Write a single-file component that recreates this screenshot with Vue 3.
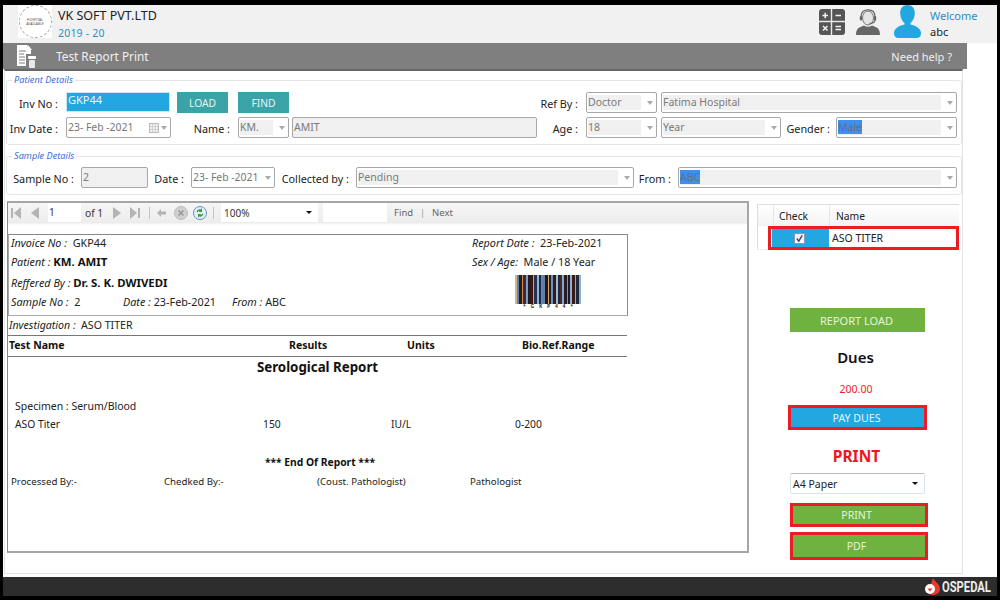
<script setup>
const barcodeColors = ['#c9b98a','#5a7fb0','#2a1a14','#c98a4a','#3b2a3a','#7f9cc8','#1c1a2e','#3a1712','#e0a050','#27324f','#8fb4dc','#1e2a44','#b07a50','#5f7fa8','#2a1512','#d8a868','#1a2030','#6b92c4','#3a1a14','#aab8c8','#1c2a4a','#4a2a20','#80a8d0','#2a1a20','#7fa070','#1a1a2a','#90b0d8','#3a1a14','#c8a070','#22283c','#8ab0d8']
const barcodeWidths = [2,2,3,1,3,2,2,3,1,3,2,2,1,3,3,1,2,2,3,2,2,2,2,3,1,2,2,3,1,3,3]
let x = 0
const bars = barcodeWidths.map((w, i) => {
  const bar = { x, w, c: barcodeColors[i] }
  x += w
  return bar
})
</script>

<template>
  <div class="app">
    <header class="top">
      <div class="logo">
        <div class="logo-ring"><span>HOSPITAL</span><span>AVAILABLE</span></div>
      </div>
      <div class="company">
        <div class="company-name">VK SOFT PVT.LTD</div>
        <div class="company-year">2019 - 20</div>
      </div>
      <svg class="ic-calc" width="26" height="26" viewBox="0 0 26 26">
        <rect width="26" height="26" rx="3" fill="#555" />
        <path d="M12.5 0v26M0 12.5h26" stroke="#e8e8e8" stroke-width="1.4" />
        <path d="M3.5 6.5h5.5M6.2 3.8v5.4M16.5 6.5h5.5M4 17l4.5 4.5M8.5 17L4 21.5M16.5 17.5h5.5M16.5 20.5h5.5" stroke="#f2f2f2" stroke-width="1.5" fill="none" />
      </svg>
      <svg class="ic-agent" width="24" height="26" viewBox="0 0 24 26">
        <ellipse cx="12" cy="9" rx="5.500" ry="7" fill="#e4e4e4" stroke="#777" stroke-width="1" />
        <path d="M5 7.500C5 2.800 8 .8 12 .8s7 2 7 6.700v3" fill="none" stroke="#666" stroke-width="1.300" />
        <path d="M19 11c0 2.200-2.500 3.400-5.500 3.600" fill="none" stroke="#666" stroke-width="1.100" />
        <rect x="3.800" y="7" width="2.200" height="4.500" rx="1" fill="#666" />
        <rect x="18" y="7" width="2.200" height="4.500" rx="1" fill="#666" />
        <path d="M0 26c0-5 1.800-7 5-8.200l3-1.400c2.400 1.800 5.600 1.800 8 0l3 1.400c3.200 1.200 5 3.200 5 8.200z" fill="#666" />
      </svg>
      <svg class="ic-user" width="27" height="33" viewBox="0 0 27 33">
        <path d="M13.500 0c4.500 0 7.300 3 7.300 8 0 4.500-2.200 8.500-4.300 10v1.500c4.500 1 10.500 3.500 10.500 8.500 0 3.500-1.500 5-4.500 5H4.500C1.500 33 0 31.500 0 28c0-5 6-7.500 10.500-8.500V18c-2.100-1.500-4.300-5.500-4.300-10 0-5 2.800-8 7.300-8z" fill="#22a7e0" />
      </svg>
      <div class="welcome">
        <div class="welcome-title">Welcome</div>
        <div class="welcome-name">abc</div>
      </div>
    </header>

    <div class="work">
      <div class="titlebar">
        <svg class="ic-doc" width="20" height="23" viewBox="0 0 20 23">
          <path d="M0 0h10l4 5v4H9v12H0z" fill="#fff" />
          <path d="M11 0l4 5h-4z" fill="#fff" />
          <path d="M2 6h7M2 9h5M2 12h6M2 15h6M2 18h6" stroke="#7f7f7f" stroke-width="1.2" />
          <rect x="11" y="11" width="8" height="3" rx="1" fill="#fff" />
          <rect x="12" y="15" width="6" height="8" rx="1" fill="#e8e8e8" />
        </svg>
        <span class="title-text">Test Report Print</span>
        <span class="help">Need help ?</span>
      </div>

      <main class="panel">
        <fieldset class="group group-patient">
          <legend>Patient Details</legend>
          <div class="row">
            <label class="lbl w51">Inv No :</label>
            <div class="input-active ml8 w104">GKP44</div>
            <button class="teal ml7 w51">LOAD</button>
            <button class="teal ml10 w51">FIND</button>
            <label class="lbl w289">Ref By :</label>
            <div class="field ml8 w71"><span class="val">Doctor</span><i class="caret"></i></div>
            <div class="field ml4 w296"><span class="val">Fatima Hospital</span><i class="caret"></i></div>
          </div>
          <div class="row row-second">
            <label class="lbl w51">Inv Date :</label>
            <div class="field plain ml8 w105">
              <span class="val date">23- Feb -2021</span>
              <svg class="cal" width="10" height="10" viewBox="0 0 10 10"><rect x=".5" y=".5" width="9" height="9" fill="#eee" stroke="#bbb" /><path d="M1 3.500h8M1 6.500h8M3.500 1v8M6.500 1v8" stroke="#ccc" stroke-width=".8" /></svg>
              <i class="caret tight"></i>
            </div>
            <label class="lbl w59">Name :</label>
            <div class="field ml8 w51"><span class="val">KM.</span><i class="caret"></i></div>
            <div class="field fill-full ml3 w245"><span class="val">AMIT</span></div>
            <label class="lbl w41">Age :</label>
            <div class="field ml8 w71"><span class="val">18</span><i class="caret"></i></div>
            <div class="field ml4 w120"><span class="val">Year</span><i class="caret"></i></div>
            <label class="lbl w49">Gender :</label>
            <div class="field ml6 w121"><span class="val"><mark>Male</mark></span><i class="caret"></i></div>
          </div>
        </fieldset>

        <fieldset class="group group-sample">
          <legend>Sample Details</legend>
          <div class="row">
            <label class="lbl w67">Sample No :</label>
            <div class="field fill-full ml7 w67"><span class="val">2</span></div>
            <label class="lbl w36">Date :</label>
            <div class="field plain ml7 w84"><span class="val date">23- Feb -2021</span><i class="caret"></i></div>
            <label class="lbl w74">Collected by :</label>
            <div class="field ml7 w278"><span class="val">Pending</span><i class="caret"></i></div>
            <label class="lbl w37">From :</label>
            <div class="field ml7 w279"><span class="val"><mark>ABC</mark></span><i class="caret"></i></div>
          </div>
        </fieldset>

        <div class="lower">
          <section class="viewer">
            <div class="toolbar">
              <svg class="tb-first" width="10" height="12" viewBox="0 0 10 12"><path d="M0 1h2v10H0zM10 0v12L3 6z" fill="#b4b4b4" /></svg>
              <svg class="tb-prev" width="8" height="12" viewBox="0 0 8 12"><path d="M8 0v12L0 6z" fill="#b4b4b4" /></svg>
              <div class="tb-page">1</div>
              <span class="tb-of">of 1</span>
              <svg class="tb-next" width="8" height="12" viewBox="0 0 8 12"><path d="M0 0v12l8-6z" fill="#b4b4b4" /></svg>
              <svg class="tb-last" width="10" height="12" viewBox="0 0 10 12"><path d="M8 1h2v10H8zM0 0v12l7-6z" fill="#b4b4b4" /></svg>
              <i class="tb-sep sep-a"></i>
              <svg class="tb-back" width="9" height="8" viewBox="0 0 9 8"><path d="M4 0v2.500h5v3H4V8L0 4z" fill="#b4b4b4" /></svg>
              <svg class="tb-stop" width="14" height="14" viewBox="0 0 14 14"><circle cx="7" cy="7" r="6.500" fill="#cfcfcf" stroke="#bbb" /><path d="M4.500 4.500l5 5M9.500 4.500l-5 5" stroke="#999" stroke-width="1.600" /></svg>
              <svg class="tb-refresh" width="14" height="14" viewBox="0 0 14 14"><circle cx="7" cy="7" r="6.500" fill="#e4f0fa" stroke="#5b93c8" /><path d="M3.500 6c.5-2 2.500-3 4.500-2.500L9 2v4H5.500l1.300-1C5.500 4.800 4.800 5.500 4.500 6.500z" fill="#3b9a3b" /><path d="M10.500 8c-.5 2-2.500 3-4.500 2.500L5 12V8h3.500l-1.300 1c1.300.2 2-.5 2.300-1.500z" fill="#3b9a3b" /></svg>
              <i class="tb-sep sep-b"></i>
              <div class="tb-zoom"><span>100%</span><i class="caret-dark"></i></div>
              <div class="tb-search"></div>
              <span class="tb-find">Find</span>
              <span class="tb-bar">|</span>
              <span class="tb-nextlink">Next</span>
            </div>

            <div class="report">
              <div class="rbox">
                <div class="rbox-left">
                  <div class="r1"><em>Invoice No :</em>&nbsp; GKP44</div>
                  <div class="r2"><em>Patient :</em>&nbsp;<b>KM. AMIT</b></div>
                  <div class="r3"><em>Reffered By :</em>&nbsp;<b>Dr. S. K. DWIVEDI</b></div>
                  <div class="r4">
                    <span class="r4a"><em>Sample No :</em>&nbsp; 2</span>
                    <span class="r4b"><em>Date :</em> 23-Feb-2021</span>
                    <span><em>From :</em> ABC</span>
                  </div>
                </div>
                <div class="rbox-right">
                  <div class="r1"><em>Report Date :</em>&nbsp; 23-Feb-2021</div>
                  <div class="r2"><em>Sex / Age:</em>&nbsp; Male / 18 Year</div>
                  <svg class="barcode" width="66" height="29" viewBox="0 0 66 29">
                    <rect v-for="(b, i) in bars" :key="i" :x="b.x" y="0" :width="b.w" height="29" :fill="b.c" />
                  </svg>
                  <div class="barcode-text">* G K P 4 4 *</div>
                </div>
              </div>
              <div class="investigation"><em>Investigation :</em>&nbsp; ASO TITER</div>
              <div class="thead">
                <b>Test Name</b><b>Results</b><b>Units</b><b>Bio.Ref.Range</b>
              </div>
              <div class="rep-title">Serological Report</div>
              <div class="specimen">Specimen : Serum/Blood</div>
              <div class="tdata"><span>ASO Titer</span><span>150</span><span>IU/L</span><span>0-200</span></div>
              <div class="rep-end">*** End Of Report ***</div>
              <div class="sign"><span>Processed By:-</span><span>Chedked By:-</span><span>(Coust. Pathologist)</span><span>Pathologist</span></div>
            </div>
          </section>

          <aside class="side">
            <div class="grid-head"><span class="gh-check">Check</span><span class="gh-name">Name</span></div>
            <div class="grid-row">
              <div class="grid-rowhead"></div>
              <div class="red-row">
                <div class="cell-check"><span class="checkbox">
                  <svg width="9" height="9" viewBox="0 0 10 10"><path d="M2 5l2.200 3L8 1.500" fill="none" stroke="#33457a" stroke-width="1.500" /></svg>
                </span></div>
                <div class="cell-name">ASO TITER</div>
              </div>
            </div>
            <div class="actions">
              <button class="green btn-load">REPORT LOAD</button>
              <div class="dues">Dues</div>
              <div class="amount">200.00</div>
              <button class="pay">PAY DUES</button>
              <div class="print-title">PRINT</div>
              <div class="paper"><span>A4 Paper</span><i class="caret-dark"></i></div>
              <button class="green outlined btn-print">PRINT</button>
              <button class="green outlined btn-pdf">PDF</button>
            </div>
          </aside>
        </div>
      </main>
    </div>

    <footer class="bottom">
      <svg class="drop" width="15" height="17" viewBox="0 0 15 17">
        <path d="M8 0c1 3 7 6 7 11 0 3.500-3 6-7 6-3 0-5-1.500-6-3.500L5 9 8 0z" fill="#e8392c" />
        <circle cx="5" cy="11" r="5" fill="#fff" />
        <path d="M2.500 10.500h5L5 13.500z" fill="#e8392c" />
      </svg>
      <span class="brand">OSPEDAL</span>
    </footer>
  </div>
</template>

<style>
html, body { margin: 0; background: #000; }
</style>

<style scoped>
* { box-sizing: border-box; }
.app {
  width: 1000px; height: 600px; background: #000; padding: 5px 3px 4px;
  display: flex; flex-direction: column; overflow: hidden;
  font-family: "Noto Sans", "Open Sans", sans-serif; font-size: 10.8px; color: #222;
}
.top { height: 38px; background: #f1f1f1; display: flex; align-items: center; flex: none; }
.logo { width: 34px; height: 33px; margin: 0 0 5px 15px; background: #fff; display: flex; align-items: center; justify-content: center; }
.logo-ring { width: 33px; height: 33px; border: 1px dashed #aaa; border-radius: 50%; display: flex; flex-direction: column; align-items: center; justify-content: center; font-size: 3.500px; line-height: 4px; color: #555; }
.company { margin-left: 6px; width: 761px; }
.company-name { font-size: 12.5px; line-height: 16px; margin-top: 0; color: #222; }
.company-year { font-size: 10.5px; line-height: 16px; margin-top: 1px; color: #2a8fc8; letter-spacing: .2px; }
.ic-calc { margin-top: -5px; flex: none; }
.ic-agent { margin: -5px 0 0 11px; flex: none; }
.ic-user { margin: -5px 0 0 14px; flex: none; }
.welcome { margin-left: 9px; margin-top: -1px; }
.welcome-title { color: #2a8fc8; font-size: 11px; line-height: 16px; }
.welcome-name { font-size: 11px; line-height: 16px; color: #222; }

.work { flex: 1; background: #fff; min-height: 0; }
.titlebar { height: 26px; width: 964px; background: #7f7f7f; display: flex; align-items: center; color: #f0f0f0; }
.ic-doc { margin-left: 14px; flex: none; }
.title-text { margin-left: 19px; font-size: 11.8px; }
.help { margin-left: auto; margin-right: 15px; font-size: 11px; padding-top: 1px; }

.panel { margin-left: 1px; width: 959px; height: 505px; background: #fff; border: 1px solid #e2e2e2; border-top: 2px solid #666; }

.group { margin: 4px 0 0 1px; width: 956px; padding: 0; border: 1px solid #e2e7ec; border-radius: 3px; min-width: 0; }
.group legend { margin-left: 5px; padding: 0 2px; height: 10px; line-height: 10px; font-size: 9.200px; font-style: italic; color: #3b6fd8; }
.group-patient { padding: 7px 0 6px; }
.group-sample { margin-top: 6px; padding: 6px 0 6px; }
.row { display: flex; align-items: center; height: 21px; }
.row-second { margin-top: 4px; }
.lbl { display: block; text-align: right; font-size: 10.8px; color: #222; flex: none; white-space: nowrap; line-height: 21px; padding-top: 2px; }

.w36 { width: 36px; } .w37 { width: 37px; } .w41 { width: 41px; } .w49 { width: 49px; } .w51 { width: 51px; }
.w59 { width: 59px; } .w67 { width: 67px; } .w71 { width: 71px; } .w74 { width: 74px; } .w84 { width: 84px; }
.w104 { width: 104px; } .w105 { width: 105px; } .w120 { width: 120px; } .w121 { width: 121px; } .w245 { width: 245px; }
.w278 { width: 278px; } .w279 { width: 279px; } .w289 { width: 289px; } .w296 { width: 296px; }
.ml3 { margin-left: 3px; } .ml4 { margin-left: 4px; } .ml6 { margin-left: 6px; } .ml7 { margin-left: 7px; } .ml8 { margin-left: 8px; } .ml10 { margin-left: 10px; }

.input-active { height: 20px; margin-top: -1px; flex: none; background: #22a7e0; border: 1px solid #cfe4ef; color: #eef6fb; font-size: 11px; line-height: 14px; padding-left: 1px; }
.teal { height: 21px; flex: none; background: #3aa3a8; border: 0; color: #e4f3f4; font: inherit; font-size: 10.3px; padding: 0; }
.field { height: 21px; flex: none; display: flex; align-items: center; border: 1px solid #a8a8a8; border-radius: 2px; background: #fff; padding: 2px 1px 2px 1px; }
.val { flex: 1; height: 15px; background: #f0f0f0; color: #7a7a7a; font-size: 10.5px; line-height: 14px; white-space: nowrap; overflow: hidden; margin-right: 6px; }
.val.date { background: transparent; color: #777; margin-right: 0; font-size: 10.4px; }
.fill-full .val { margin-right: 0; }
.fill-full { background: #f0f0f0; }
.val mark { background: #3e8ff0; color: #5f6f86; }
.caret { width: 0; height: 0; margin: 0 2px 0 0; border-left: 3.500px solid transparent; border-right: 3.500px solid transparent; border-top: 4px solid #aaa; flex: none; }
.caret.tight { margin: 0 2px 0 2px; }
.cal { flex: none; }

.lower { display: flex; margin-top: 6px; }
.viewer { margin-left: 2px; width: 742px; height: 352px; border: 2px solid #a6a6a6; border-left: 1px solid #8a8a8a; flex: none; }
.toolbar { height: 19px; display: flex; align-items: center; background: linear-gradient(#f5f5f5, #ededed); position: relative; color: #333; }
.toolbar::after { content: ""; position: absolute; left: 0; right: 0; top: 19px; height: 3px; background: linear-gradient(#e8e8e8, #fff); }
.tb-first { margin-left: 3px; flex: none; }
.tb-prev { margin-left: 10px; flex: none; }
.tb-page { margin-left: 9px; width: 33px; height: 19px; background: #fff; font-size: 10px; line-height: 19px; padding-left: 1px; flex: none; }
.tb-of { margin-left: 4px; width: 22px; font-size: 10.2px; flex: none; white-space: nowrap; }
.tb-next { margin-left: 6px; flex: none; }
.tb-last { margin-left: 9px; flex: none; }
.tb-sep { width: 1px; height: 12px; background: #c4c4c4; flex: none; }
.sep-a { margin-left: 9px; }
.tb-back { margin-left: 7px; flex: none; }
.tb-stop { margin-left: 8px; flex: none; }
.tb-refresh { margin-left: 5px; flex: none; }
.sep-b { margin-left: 6px; }
.tb-zoom { margin-left: 7px; width: 97px; height: 19px; background: #fff; display: flex; align-items: center; justify-content: space-between; padding: 0 6px 0 3px; font-size: 10px; flex: none; }
.tb-search { margin-left: 5px; width: 64px; height: 19px; background: #fff; flex: none; }
.tb-find { margin-left: 7px; font-size: 9.500px; color: #666; }
.tb-bar { margin-left: 7px; font-size: 9px; color: #999; }
.tb-nextlink { margin-left: 7px; font-size: 9.500px; color: #666; }
.caret-dark { width: 0; height: 0; border-left: 3px solid transparent; border-right: 3px solid transparent; border-top: 3.500px solid #111; flex: none; }

.report { padding-top: 12px; font-size: 10.8px; color: #222; line-height: 18px; }
.report em { font-style: italic; color: #222; }
.report b { font-weight: 700; color: #111; }
.rbox { width: 620px; height: 82px; border: 1px solid #888; border-left-color: #aaa; border-bottom-color: #aaa; display: flex; }
.rbox-left { width: 463px; padding-left: 2px; flex: none; }
.rbox-right { flex: 1; }
.r1 { height: 18px; line-height: 16px; }
.r2 { height: 20px; line-height: 18px; }
.r3 { height: 21px; line-height: 20px; }
.r4 { height: 18px; line-height: 16px; display: flex; }
.r2 b, .r3 b { font-size: 11.4px; }
.r4a { width: 112px; }
.r4b { width: 109px; }
.barcode { display: block; margin: 2px 0 0 43px; }
.barcode-text { margin-left: 43px; width: 66px; text-align: center; font-size: 5px; line-height: 5px; font-weight: 700; color: #333; word-spacing: 3.500px; white-space: nowrap; }
.investigation { height: 19px; line-height: 18px; width: 620px; padding-left: 1px; font-size: 10.6px; }
.thead { width: 619px; height: 22px; border-top: 1px solid #777; border-bottom: 1px solid #777; display: grid; grid-template-columns: 280px 118px 115px 1fr; padding-left: 1px; line-height: 19px; font-size: 10.500px; }
.rep-title { width: 619px; height: 21px; line-height: 21px; text-align: center; font-size: 13.300px; font-weight: 700; color: #111; }
.specimen { margin-top: 19px; padding-left: 7px; height: 18px; font-size: 10.5px; }
.tdata { height: 18px; display: grid; grid-template-columns: 248px 128px 124px 1fr; padding-left: 7px; font-size: 10.3px; }
.rep-end { margin-top: 20px; width: 624px; height: 18px; text-align: center; font-weight: 700; color: #111; font-size: 10.3px; }
.sign { margin-top: 2px; height: 18px; display: grid; grid-template-columns: repeat(4, 153px); padding-left: 3px; font-size: 9.700px; }

.side { margin-left: 8px; width: 202px; flex: none; padding-top: 3px; }
.grid-head { height: 22px; border-top: 1px solid #ddd; border-left: 1px solid #ddd; display: flex; font-size: 10.300px; line-height: 22px; background: linear-gradient(#fff, #f3f3f3); }
.gh-check { margin-left: 15px; width: 56px; border-left: 1px solid #e6e6e6; padding-left: 5px; }
.gh-name { border-left: 1px solid #e6e6e6; padding-left: 6px; flex: 1; }
.grid-row { display: flex; height: 24px; }
.grid-rowhead { width: 11px; height: 24px; border-left: 1px solid #ddd; border-bottom: 1px solid #eee; flex: none; }
.red-row { width: 191px; height: 24px; border: 3px solid #ed1c24; display: flex; flex: none; }
.cell-check { width: 57px; margin-left: 1px; background: #22a7e0; display: flex; align-items: center; justify-content: center; flex: none; }
.checkbox { width: 11px; height: 11px; background: linear-gradient(#e8eef5, #fff); border: 1px solid #8a97ad; display: flex; align-items: center; justify-content: center; margin-left: -2px; }
.checkbox svg { display: block; }
.cell-name { padding-left: 3px; font-size: 10.5px; line-height: 18px; color: #222; }

.actions { margin-left: 31px; width: 142px; display: flex; flex-direction: column; align-items: flex-start; }
.actions button { border: 0; font: inherit; font-size: 10.6px; color: #e8f4dc; padding: 0; }
.green { background: #70b23f; }
.actions .btn-load { margin: 58px 0 0 2px; width: 135px; height: 24px; padding-right: 2px; font-size: 11px; }
.dues { margin-top: 14px; width: 135px; height: 22px; line-height: 22px; text-align: center; font-size: 15px; font-weight: 600; color: #111; }
.amount { margin-top: 13px; width: 136px; height: 16px; line-height: 16px; text-align: center; font-size: 10.500px; color: #f01c1c; }
.actions .pay { margin-top: 8px; width: 139px; height: 25px; background: #22a7e0; border: 3px solid #ed1c24; color: #e6f5fc; padding-right: 2px; }
.print-title { margin-top: 15px; width: 137px; height: 22px; line-height: 22px; text-align: center; font-size: 15.500px; font-weight: 700; color: #f4141c; }
.paper { margin: 6px 0 0 2px; width: 135px; height: 21px; border: 1px solid #dbe3ea; border-top-color: #bbb; border-radius: 2px; display: flex; align-items: center; justify-content: space-between; padding: 0 6px 0 2px; font-size: 10.500px; color: #222; }
.actions .outlined { border: 3px solid #ed1c24; margin-left: 2px; width: 138px; padding-right: 5px; }
.actions .btn-print { margin-top: 9px; height: 24px; }
.actions .btn-pdf { margin-top: 5px; height: 28px; }

.bottom { height: 19px; background: #2d2d2d; display: flex; align-items: center; padding-left: 922px; flex: none; }
.drop { margin-right: 2px; flex: none; }
.brand { font-family: Roboto, "DejaVu Sans", sans-serif; font-weight: 700; font-size: 14px; color: #eee; white-space: nowrap; display: inline-block; transform: scaleX(.8); transform-origin: left center; }
</style>
